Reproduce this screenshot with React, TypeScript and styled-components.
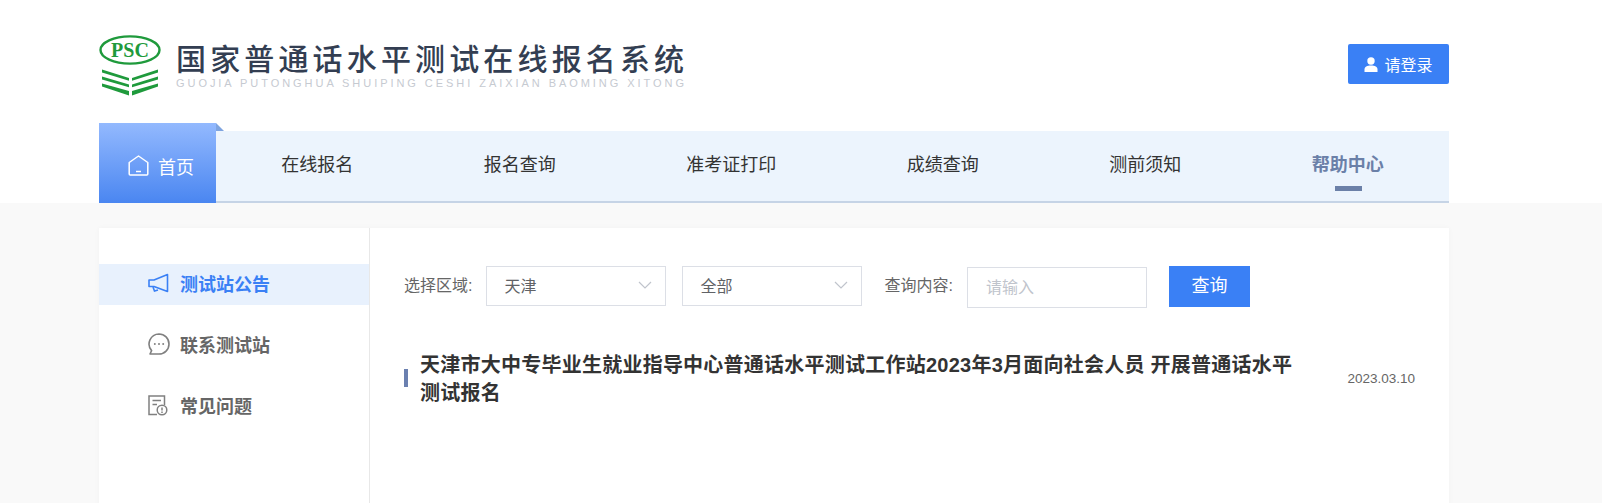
import React from "react";
import styled, { createGlobalStyle } from "styled-components";

const FONT = `"Liberation Sans", "Noto Sans CJK SC", sans-serif`;

const GlobalStyle = createGlobalStyle`
  html, body {
    margin: 0;
    padding: 0;
    height: 503px;
    overflow: hidden;
    background: #f9f9f9;
    font-family: ${FONT};
  }
`;

const Header = styled.header`
  background: #fff;
  height: 203px;
  padding: 0 153px 0 99px;
  box-sizing: border-box;
`;

const TopBar = styled.div`
  height: 123px;
  display: flex;
  align-items: flex-start;
  justify-content: space-between;
`;

const Brand = styled.div`
  display: flex;
  align-items: flex-start;
  padding-top: 35px;
`;

const BrandText = styled.div`
  margin-left: 15px;
  padding-top: 4px;
`;

const BrandTitle = styled.div`
  font-size: 30px;
  line-height: 36px;
  letter-spacing: 4.15px;
  font-weight: 500;
  color: #333e52;
  white-space: nowrap;
  font-family: "Noto Sans CJK SC", sans-serif;
`;

const BrandSub = styled.div`
  font-size: 11px;
  line-height: 12px;
  letter-spacing: 2.95px;
  color: #c6cad1;
  white-space: nowrap;
  margin-top: 2px;
`;

const LoginButton = styled.button`
  margin-top: 44px;
  width: 101px;
  height: 40px;
  border: 0;
  border-radius: 2px;
  background: #3a80f5;
  color: #fff;
  font: 16px ${FONT};
  display: flex;
  align-items: center;
  justify-content: center;
  gap: 6px;
  padding: 0;
`;

const Nav = styled.nav`
  display: flex;
  align-items: flex-end;
  height: 80px;
`;

const HomeTab = styled.a`
  position: relative;
  width: 117px;
  height: 80px;
  flex: none;
  display: flex;
  align-items: center;
  justify-content: center;
  gap: 9px;
  padding: 5px 0 0 7px;
  box-sizing: border-box;
  color: #fff;
  font-size: 18px;
  background: linear-gradient(180deg, #93b9fe 0%, #4a86f1 100%);

  &::after {
    content: "";
    position: absolute;
    left: 100%;
    top: 0;
    width: 8px;
    height: 8px;
    background: #7ea4e0;
    clip-path: polygon(0 0, 100% 100%, 0 100%);
  }
`;

const NavList = styled.div`
  flex: 1;
  height: 72px;
  box-sizing: border-box;
  background: #ecf4fd;
  border-bottom: 2px solid #c6d4e6;
  padding: 0 0 2px 0;
  display: flex;
  align-items: center;
  justify-content: space-around;
`;

const NavItem = styled.a<{ $active?: boolean }>`
  position: relative;
  font-size: 18px;
  line-height: 24px;
  color: ${(p) => (p.$active ? "#6b80a8" : "#333")};
  font-weight: ${(p) => (p.$active ? 700 : 400)};

  ${(p) =>
    p.$active &&
    `
    &::after {
      content: "";
      position: absolute;
      left: 50%;
      top: 33px;
      width: 27px;
      height: 5px;
      margin-left: -13px;
      background: #6b80a8;
    }
  `}
`;

const Card = styled.main`
  margin: 25px 153px 0 99px;
  height: 400px;
  background: #fff;
  display: flex;
  box-shadow: 0 0 6px rgba(0, 0, 0, 0.03);
`;

const Sidebar = styled.aside`
  width: 271px;
  flex: none;
  box-sizing: border-box;
  padding-top: 36px;
  border-right: 1px solid #e8e8e8;
`;

const SideItem = styled.a<{ $active?: boolean }>`
  height: 41px;
  box-sizing: border-box;
  padding: 0 0 3px 49px;
  margin-bottom: 20px;
  display: flex;
  align-items: center;
  font-size: 18px;
  font-weight: 700;
  color: ${(p) => (p.$active ? "#3a80f5" : "#666")};
  background: ${(p) => (p.$active ? "#e8f1fd" : "transparent")};
`;

const SideIcon = styled.span`
  width: 32px;
  flex: none;
  display: flex;
  align-items: center;
`;

const Content = styled.section`
  flex: 1;
  padding: 38px 33px 0 34px;
`;

const Filters = styled.div`
  display: flex;
  align-items: flex-start;
`;

const Label = styled.label<{ $second?: boolean }>`
  font-size: 16px;
  line-height: 40px;
  color: #666;
  margin: 0 14px 0 ${(p) => (p.$second ? "6px" : "0")};
  white-space: nowrap;
`;

const Select = styled.div`
  width: 180px;
  height: 40px;
  box-sizing: border-box;
  border: 1px solid #dcdfe6;
  margin-right: 16px;
  padding: 0 13px 2px 17px;
  display: flex;
  align-items: center;
  justify-content: space-between;
  font-size: 16px;
  color: #606266;
`;

const SearchInput = styled.input`
  width: 180px;
  height: 41px;
  box-sizing: border-box;
  border: 1px solid #dcdfe6;
  margin-top: 1px;
  padding: 0 18px;
  font: 16px ${FONT};
  outline: none;

  &::placeholder {
    color: #c0c4cc;
    opacity: 1;
  }
`;

const SearchButton = styled.button`
  width: 81px;
  height: 41px;
  margin-left: 22px;
  border: 0;
  padding: 0 0 5px;
  background: #3a80f5;
  color: #fff;
  font: 18px ${FONT};
`;

const Notice = styled.article`
  margin-top: 43px;
  display: flex;
  align-items: center;
  justify-content: space-between;
`;

const NoticeTitle = styled.h3`
  position: relative;
  margin: 0;
  width: 896px;
  padding-left: 16px;
  box-sizing: border-box;
  font-size: 20px;
  line-height: 28px;
  letter-spacing: 0.24px;
  font-weight: 700;
  color: #333;

  &::before {
    content: "";
    position: absolute;
    left: 0;
    top: 18px;
    width: 4px;
    height: 18px;
    background: #6b80b0;
  }
`;

const NoticeDate = styled.time`
  font-size: 13.5px;
  color: #666;
  white-space: nowrap;
  margin: 0 1px 2px 0;
`;

const PscLogo = () => (
  <svg width="62" height="62" viewBox="0 0 62 62" fill="none">
    <ellipse cx="31" cy="15" rx="29.5" ry="13.6" stroke="#1f9a3c" strokeWidth="2.4" />
    <text
      x="31"
      y="21.5"
      textAnchor="middle"
      fontFamily="'Liberation Serif', serif"
      fontWeight="700"
      fontSize="20"
      fill="#1f9a3c"
    >
      PSC
    </text>
    <g fill="#1f9a3c">
      <path d="M3 34.5 L30 43 V45.8 L3 37.5Z" />
      <path d="M3 41.5 L30 49.5 V52.3 L3 44.5Z" />
      <path d="M3 48.5 L30 56 V60.5 L3 51.5Z" />
      <path d="M59 34.5 L33 43 V45.8 L59 37.5Z" />
      <path d="M59 41.5 L33 49.5 V52.3 L59 44.5Z" />
      <path d="M59 48.5 L33 56 V60.5 L59 51.5Z" />
    </g>
  </svg>
);

const UserIcon = () => (
  <svg width="14" height="15" viewBox="0 0 14 15" fill="#fff">
    <circle cx="7" cy="4" r="3.7" />
    <path d="M0.5 15 V12.5 C0.5 10 3 8.6 7 8.6 S13.5 10 13.5 12.5 V15Z" />
  </svg>
);

const HomeIcon = () => (
  <svg width="21" height="21" viewBox="0 0 21 21" fill="none" stroke="#fff" strokeWidth="1.5">
    <path d="M1.2 7.5 L10.5 1 L19.8 7.5 V19 Q19.8 20 18.8 20 H2.2 Q1.2 20 1.2 19Z" strokeLinejoin="round" />
    <path d="M8 16.5 H13" />
  </svg>
);

const MegaphoneIcon = () => (
  <svg width="21" height="20" viewBox="0 0 21 20" fill="none" stroke="#3a80f5" strokeWidth="1.6">
    <path d="M19.5 1.5 V18.5 L6 13.5 H1 V7 H6Z" strokeLinejoin="round" />
    <path d="M5 14 L6.5 18 L10 17" />
  </svg>
);

const ChatIcon = () => (
  <svg width="22" height="22" viewBox="0 0 22 22" fill="none">
    <path
      d="M11 1 A10 10 0 1 1 11 21 H2 L3.6 17.6 A10 10 0 0 1 11 1Z"
      stroke="#808080"
      strokeWidth="1.6"
      strokeLinejoin="round"
    />
    <g fill="#808080">
      <circle cx="6.8" cy="11" r="1" />
      <circle cx="11" cy="11" r="1" />
      <circle cx="15.2" cy="11" r="1" />
    </g>
  </svg>
);

const DocIcon = () => (
  <svg width="20" height="21" viewBox="0 0 20 21" fill="none" stroke="#808080" strokeWidth="1.5">
    <path d="M9 19.5 H1 V1 H16.5 V10" />
    <path d="M4.5 5.5 H13 M4.5 9.5 H9" />
    <circle cx="14" cy="15" r="4.8" />
    <path d="M14 12.5 V15.5 M14 16.5 V18" />
  </svg>
);

const Chevron = () => (
  <svg width="14" height="8" viewBox="0 0 14 8" fill="none" stroke="#c0c4cc" strokeWidth="1.2">
    <path d="M1 1 L7 7 L13 1" />
  </svg>
);

const navItems = ["在线报名", "报名查询", "准考证打印", "成绩查询", "测前须知"];

export default function App() {
  return (
    <>
      <GlobalStyle />
      <Header>
        <TopBar>
          <Brand>
            <PscLogo />
            <BrandText>
              <BrandTitle>国家普通话水平测试在线报名系统</BrandTitle>
              <BrandSub>GUOJIA PUTONGHUA SHUIPING CESHI ZAIXIAN BAOMING XITONG</BrandSub>
            </BrandText>
          </Brand>
          <LoginButton>
            <UserIcon />
            请登录
          </LoginButton>
        </TopBar>
        <Nav>
          <HomeTab>
            <HomeIcon />
            首页
          </HomeTab>
          <NavList>
            {navItems.map((item) => (
              <NavItem key={item}>{item}</NavItem>
            ))}
            <NavItem $active>帮助中心</NavItem>
          </NavList>
        </Nav>
      </Header>
      <Card>
        <Sidebar>
          <SideItem $active>
            <SideIcon>
              <MegaphoneIcon />
            </SideIcon>
            测试站公告
          </SideItem>
          <SideItem>
            <SideIcon>
              <ChatIcon />
            </SideIcon>
            联系测试站
          </SideItem>
          <SideItem>
            <SideIcon>
              <DocIcon />
            </SideIcon>
            常见问题
          </SideItem>
        </Sidebar>
        <Content>
          <Filters>
            <Label>选择区域:</Label>
            <Select>
              天津
              <Chevron />
            </Select>
            <Select>
              全部
              <Chevron />
            </Select>
            <Label $second>查询内容:</Label>
            <SearchInput placeholder="请输入" />
            <SearchButton>查询</SearchButton>
          </Filters>
          <Notice>
            <NoticeTitle>
              天津市大中专毕业生就业指导中心普通话水平测试工作站2023年3月面向社会人员 开展普通话水平测试报名
            </NoticeTitle>
            <NoticeDate>2023.03.10</NoticeDate>
          </Notice>
        </Content>
      </Card>
    </>
  );
}
